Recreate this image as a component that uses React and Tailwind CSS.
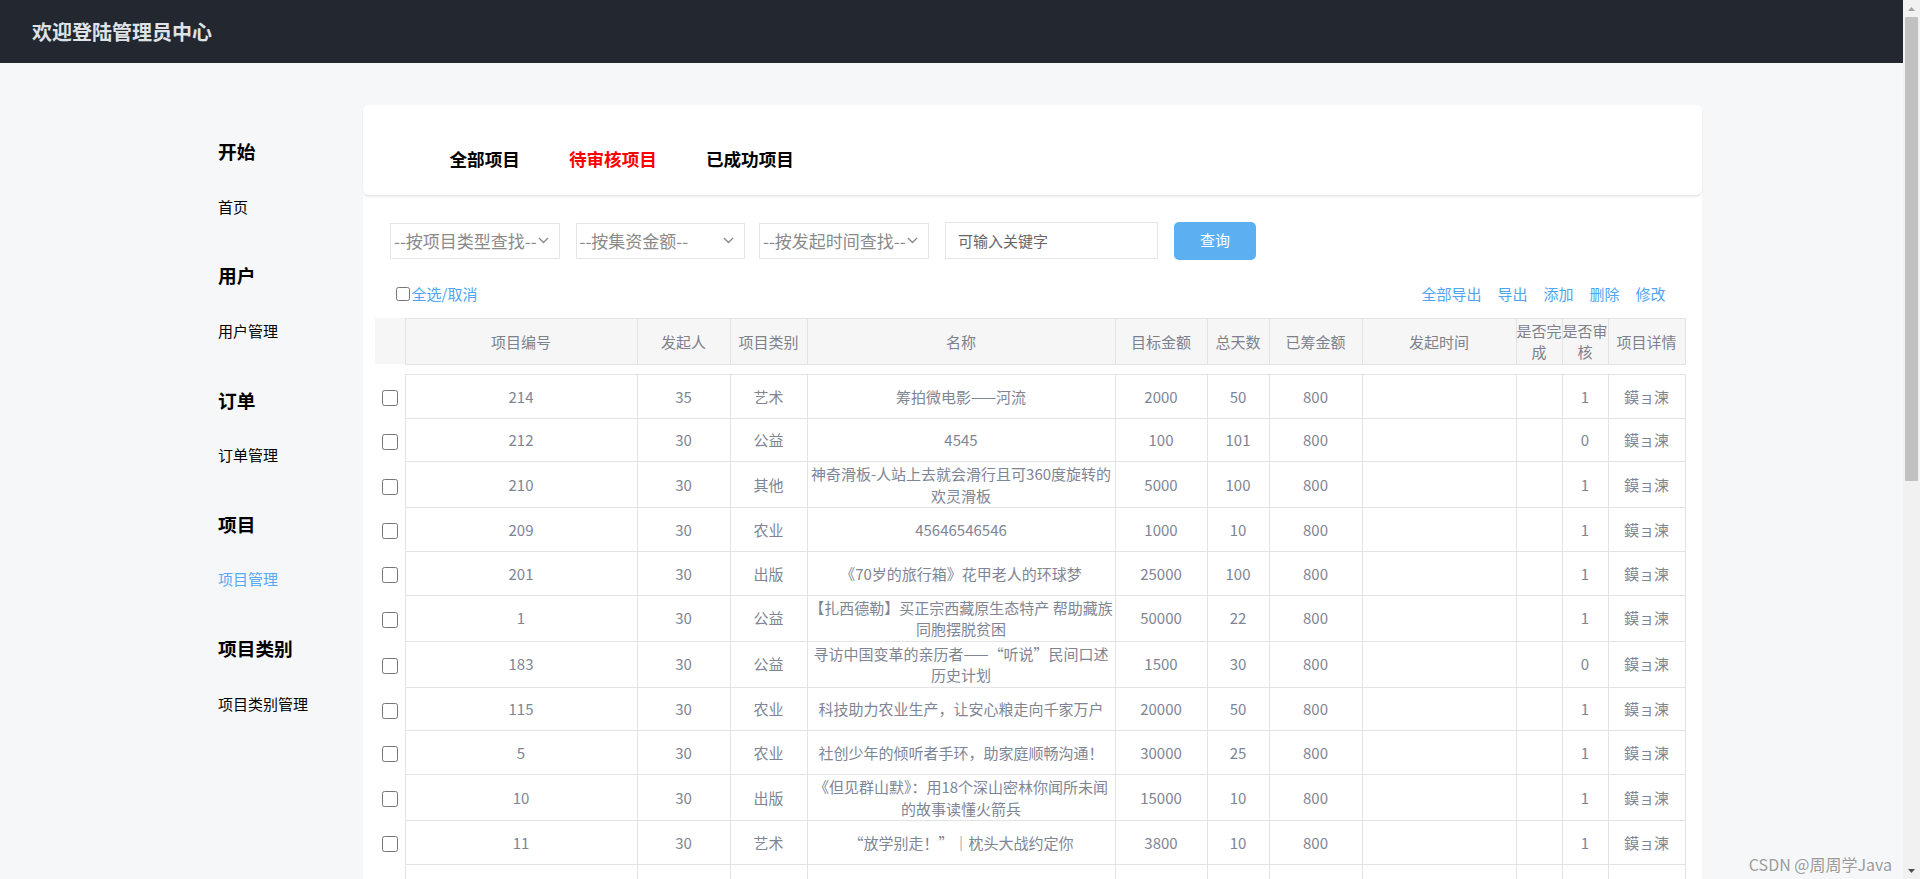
import { useState } from 'react';

const menu = [
  { title: '开始', item: '首页' },
  { title: '用户', item: '用户管理' },
  { title: '订单', item: '订单管理' },
  { title: '项目', item: '项目管理', active: true },
  { title: '项目类别', item: '项目类别管理' },
];

const tabs = ['全部项目', '待审核项目', '已成功项目'];

const rows = [
  { id: '214', user: '35', type: '艺术', name: ['筹拍微电影——河流'], target: '2000', days: '50', audit: '1' },
  { id: '212', user: '30', type: '公益', name: ['4545'], target: '100', days: '101', audit: '0' },
  { id: '210', user: '30', type: '其他', name: ['神奇滑板-人站上去就会滑行且可360度旋转的', '欢灵滑板'], target: '5000', days: '100', audit: '1' },
  { id: '209', user: '30', type: '农业', name: ['45646546546'], target: '1000', days: '10', audit: '1' },
  { id: '201', user: '30', type: '出版', name: ['《70岁的旅行箱》花甲老人的环球梦'], target: '25000', days: '100', audit: '1' },
  { id: '1', user: '30', type: '公益', name: ['【扎西德勒】买正宗西藏原生态特产 帮助藏族', '同胞摆脱贫困'], target: '50000', days: '22', audit: '1' },
  { id: '183', user: '30', type: '公益', name: ['寻访中国变革的亲历者——“听说”民间口述', '历史计划'], target: '1500', days: '30', audit: '0' },
  { id: '115', user: '30', type: '农业', name: ['科技助力农业生产，让安心粮走向千家万户'], target: '20000', days: '50', audit: '1' },
  { id: '5', user: '30', type: '农业', name: ['社创少年的倾听者手环，助家庭顺畅沟通！'], target: '30000', days: '25', audit: '1' },
  { id: '10', user: '30', type: '出版', name: ['《但见群山默》：用18个深山密林你闻所未闻', '的故事读懂火箭兵'], target: '15000', days: '10', audit: '1' },
  { id: '11', user: '30', type: '艺术', name: ['“放学别走！”｜枕头大战约定你'], target: '3800', days: '10', audit: '1' },
];

const widths = [30, 232, 93, 77, 308, 92, 62, 93, 154, 46, 46, 77];

function Cols() {
  return (
    <colgroup>
      {widths.map((w, i) => (
        <col key={i} style={{ width: w }} />
      ))}
    </colgroup>
  );
}

function Chevron() {
  return (
    <svg width="11" height="7" viewBox="0 0 11 7" fill="none" className="shrink-0">
      <path d="M1 1l4.5 4.5L10 1" stroke="#8a8a8a" strokeWidth="1.4" />
    </svg>
  );
}

function FakeSelect({ label, width }) {
  return (
    <div
      className="h-[36px] border border-[#e5e5e5] bg-white flex items-center justify-between pl-[3px] pr-[10px] text-[17px] text-[#8a8a8a] leading-none whitespace-nowrap overflow-hidden"
      style={{ width }}
    >
      <span>{label}</span>
      <Chevron />
    </div>
  );
}

export default function App() {
  const [activeTab, setActiveTab] = useState(1);

  const td = 'border border-[#e3e3e3] text-center align-middle py-px leading-[21.5px]';

  return (
    <div className="flex h-screen overflow-hidden bg-[#f6f7f9] font-['Noto_Sans_CJK_SC',sans-serif] relative">
      <div className="flex-1 min-w-0 flex flex-col">
        {/* Header */}
        <header className="h-[63px] shrink-0 bg-[#23272f] flex items-center pl-[32px]">
          <h1 className="text-[20px] font-bold text-[#dfe2e6] leading-none">欢迎登陆管理员中心</h1>
        </header>

        <div className="flex-1 min-h-0">
          <div className="w-[1500px] mx-auto flex h-full pt-[42px]">
            {/* Sidebar */}
            <aside className="w-[161px] shrink-0 pl-[16.5px] pt-[34px]">
              {menu.map((m) => (
                <div key={m.title} className="mb-[44.75px]">
                  <h3 className="text-[18.72px] font-bold text-black leading-6">{m.title}</h3>
                  <a
                    className={`block mt-[31.5px] text-[15px] leading-6 ${
                      m.active ? 'text-[#58a8f5]' : 'text-black'
                    }`}
                  >
                    {m.item}
                  </a>
                </div>
              ))}
            </aside>

            {/* Main */}
            <main className="flex-1 min-w-0 bg-white rounded-t-md flex flex-col">
              {/* Tabs */}
              <div className="h-[90px] shrink-0 rounded-md bg-white shadow-[0_2px_2px_rgba(0,0,0,0.09)] pt-[42px] pl-[87px] flex gap-[49px]">
                {tabs.map((t, i) => (
                  <button
                    key={t}
                    onClick={() => setActiveTab(i)}
                    className={`h-6 text-[17.6px] font-bold leading-6 ${
                      activeTab === i ? 'text-[#ff0000]' : 'text-black'
                    }`}
                  >
                    {t}
                  </button>
                ))}
              </div>

              <div className="flex-1 px-[12.5px] pr-[14px] pt-[26.6px]">
                {/* Filters */}
                <div className="flex items-center h-[38px] ml-[15px]">
                  <FakeSelect label="--按项目类型查找--" width={170} />
                  <div className="w-[15.5px]" />
                  <FakeSelect label="--按集资金额--" width={169} />
                  <div className="w-[14.5px]" />
                  <FakeSelect label="--按发起时间查找--" width={170} />
                  <div className="w-[16px]" />
                  <input
                    type="text"
                    placeholder="可输入关键字"
                    className="h-[37px] w-[213px] border border-[#e5e5e5] pl-[12px] text-[15px] outline-none placeholder:text-[#666]"
                  />
                  <div className="w-[16px]" />
                  <button className="h-[38px] w-[82px] rounded-[5px] bg-[#5cb0f2] text-white text-[15px]">
                    查询
                  </button>
                </div>

                {/* Select all + actions */}
                <div className="flex items-center justify-between h-6 mt-[22.4px]">
                  <label className="flex items-end ml-[20.5px] text-[15px] text-[#4ea5f3] leading-6">
                    <input type="checkbox" className="m-0 mb-[5px] w-[14px] h-[14px]" />
                    <span className="ml-[2px]">全选/取消</span>
                  </label>
                  <div className="flex gap-[16px] mr-[22px] text-[15px] text-[#4ea5f3] leading-6">
                    <a>全部导出</a>
                    <a>导出</a>
                    <a>添加</a>
                    <a>删除</a>
                    <a>修改</a>
                  </div>
                </div>

                {/* Table header */}
                <table className="mt-[12px] w-[1310px] table-fixed border-collapse text-[15px] text-[#7c818c]">
                  <Cols />
                  <thead>
                    <tr className="h-[46px] bg-[#f6f6f6]">
                      <th className="border-0 font-normal" />
                      {['项目编号', '发起人', '项目类别', '名称', '目标金额', '总天数', '已筹金额', '发起时间', '是否完成', '是否审核', '项目详情'].map(
                        (h) => (
                          <th key={h} className={`${td} font-normal`}>
                            {h}
                          </th>
                        )
                      )}
                    </tr>
                  </thead>
                </table>

                {/* Table body */}
                <table className="mt-[9px] w-[1310px] table-fixed border-collapse text-[15px] text-[#7e8594]">
                  <Cols />
                  <tbody>
                    {rows.map((r) => (
                      <tr key={r.id} className="h-[43.7px]">
                        <td className="border-0 text-center align-middle">
                          <input type="checkbox" className="m-0 w-4 h-4 align-middle" />
                        </td>
                        <td className={td}>{r.id}</td>
                        <td className={td}>{r.user}</td>
                        <td className={td}>{r.type}</td>
                        <td className={`${td} whitespace-nowrap`}>
                          {r.name.map((l, i) => (
                            <div key={i}>{l}</div>
                          ))}
                        </td>
                        <td className={td}>{r.target}</td>
                        <td className={td}>{r.days}</td>
                        <td className={td}>800</td>
                        <td className={td}></td>
                        <td className={td}></td>
                        <td className={td}>{r.audit}</td>
                        <td className={td}>鏌ョ湅</td>
                      </tr>
                    ))}
                    <tr className="h-[43.7px]">
                      <td className="border-0 text-center align-middle">
                        <input type="checkbox" className="m-0 w-4 h-4 align-middle" />
                      </td>
                      {Array.from({ length: 11 }).map((_, i) => (
                        <td key={i} className={td}></td>
                      ))}
                    </tr>
                  </tbody>
                </table>
              </div>
            </main>
          </div>
        </div>
      </div>

      {/* Scrollbar */}
      <div className="w-[17px] shrink-0 bg-[#f1f1f1] flex flex-col">
        <div className="h-[17px] flex items-center justify-center">
          <svg width="7" height="4" viewBox="0 0 7 4">
            <path d="M3.5 0L7 4H0z" fill="#a3a3a3" />
          </svg>
        </div>
        <div className="h-[464px] mx-[2px] rounded-[1px] bg-[#c1c1c1]" />
        <div className="flex-1" />
        <div className="h-[17px] flex items-center justify-center">
          <svg width="7" height="4" viewBox="0 0 7 4">
            <path d="M0 0h7L3.5 4z" fill="#505050" />
          </svg>
        </div>
      </div>

      {/* Watermark */}
      <div className="absolute right-[28px] bottom-[3px] text-[16px] text-[#9a9a9a] leading-6 [text-shadow:0_0_2px_#fff]">
        CSDN @周周学Java
      </div>
    </div>
  );
}
